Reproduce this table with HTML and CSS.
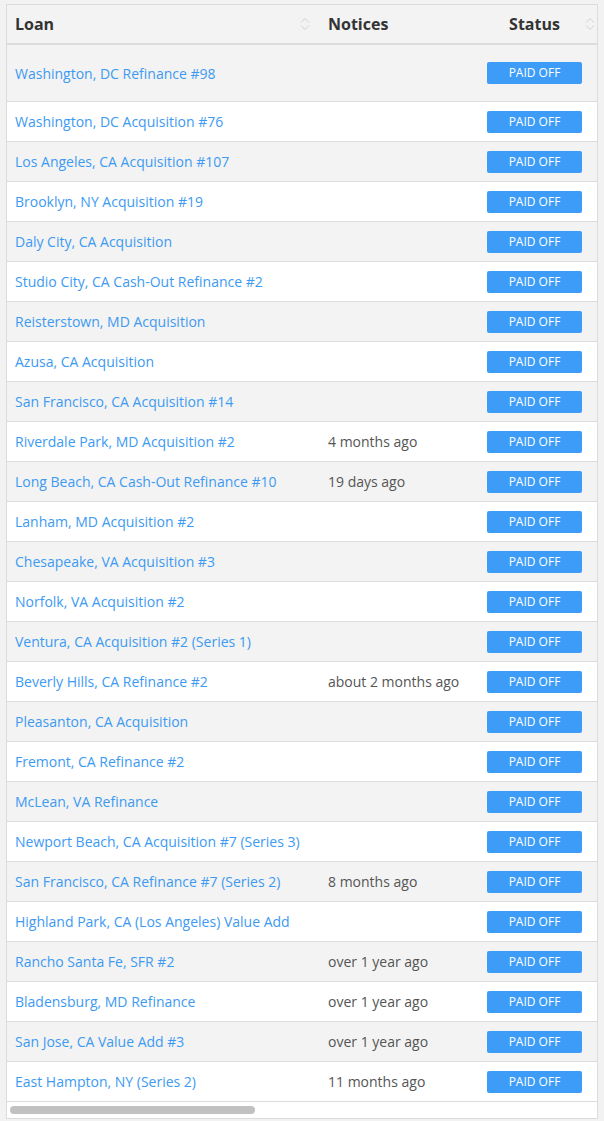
FILE: index.html
```html
<!DOCTYPE html>
<html lang="en">
<head>
    <meta charset="UTF-8">
    <meta name="viewport" content="width=device-width, initial-scale=1.0">
    <title>Loans</title>
    <link rel="stylesheet" href="styles.css">
</head>
<body>
    <div class="table-wrap">
        <table class="loans">
            <colgroup>
                <col class="col-loan">
                <col class="col-notices">
                <col class="col-status">
            </colgroup>
            <thead>
                <tr>
                    <th>
                        <div class="th-inner">
                            <span>Loan</span>
                            <svg class="sort-icon" width="10" height="14" viewBox="0 0 10 14"><path d="M1 5.5 L5 1.5 L9 5.5 M1 8.5 L5 12.5 L9 8.5" fill="none" stroke="#cfcfcf" stroke-width="1"/></svg>
                        </div>
                    </th>
                    <th>
                        <div class="th-inner">
                            <span>Notices</span>
                        </div>
                    </th>
                    <th class="th-status">
                        <div class="th-inner th-center">
                            <span></span>
                            <span>Status</span>
                            <svg class="sort-icon" width="10" height="14" viewBox="0 0 10 14"><path d="M1 5.5 L5 1.5 L9 5.5 M1 8.5 L5 12.5 L9 8.5" fill="none" stroke="#cfcfcf" stroke-width="1"/></svg>
                        </div>
                    </th>
                </tr>
            </thead>
            <tbody>
                <tr class="first"><td><a href="#">Washington, DC Refinance #98</a></td><td></td><td><span class="badge">Paid Off</span></td></tr>
                <tr><td><a href="#">Washington, DC Acquisition #76</a></td><td></td><td><span class="badge">Paid Off</span></td></tr>
                <tr><td><a href="#">Los Angeles, CA Acquisition #107</a></td><td></td><td><span class="badge">Paid Off</span></td></tr>
                <tr><td><a href="#">Brooklyn, NY Acquisition #19</a></td><td></td><td><span class="badge">Paid Off</span></td></tr>
                <tr><td><a href="#">Daly City, CA Acquisition</a></td><td></td><td><span class="badge">Paid Off</span></td></tr>
                <tr><td><a href="#">Studio City, CA Cash-Out Refinance #2</a></td><td></td><td><span class="badge">Paid Off</span></td></tr>
                <tr><td><a href="#">Reisterstown, MD Acquisition</a></td><td></td><td><span class="badge">Paid Off</span></td></tr>
                <tr><td><a href="#">Azusa, CA Acquisition</a></td><td></td><td><span class="badge">Paid Off</span></td></tr>
                <tr><td><a href="#">San Francisco, CA Acquisition #14</a></td><td></td><td><span class="badge">Paid Off</span></td></tr>
                <tr><td><a href="#">Riverdale Park, MD Acquisition #2</a></td><td>4 months ago</td><td><span class="badge">Paid Off</span></td></tr>
                <tr><td><a href="#">Long Beach, CA Cash-Out Refinance #10</a></td><td>19 days ago</td><td><span class="badge">Paid Off</span></td></tr>
                <tr><td><a href="#">Lanham, MD Acquisition #2</a></td><td></td><td><span class="badge">Paid Off</span></td></tr>
                <tr><td><a href="#">Chesapeake, VA Acquisition #3</a></td><td></td><td><span class="badge">Paid Off</span></td></tr>
                <tr><td><a href="#">Norfolk, VA Acquisition #2</a></td><td></td><td><span class="badge">Paid Off</span></td></tr>
                <tr><td><a href="#">Ventura, CA Acquisition #2 (Series 1)</a></td><td></td><td><span class="badge">Paid Off</span></td></tr>
                <tr><td><a href="#">Beverly Hills, CA Refinance #2</a></td><td>about 2 months ago</td><td><span class="badge">Paid Off</span></td></tr>
                <tr><td><a href="#">Pleasanton, CA Acquisition</a></td><td></td><td><span class="badge">Paid Off</span></td></tr>
                <tr><td><a href="#">Fremont, CA Refinance #2</a></td><td></td><td><span class="badge">Paid Off</span></td></tr>
                <tr><td><a href="#">McLean, VA Refinance</a></td><td></td><td><span class="badge">Paid Off</span></td></tr>
                <tr><td><a href="#">Newport Beach, CA Acquisition #7 (Series 3)</a></td><td></td><td><span class="badge">Paid Off</span></td></tr>
                <tr><td><a href="#">San Francisco, CA Refinance #7 (Series 2)</a></td><td>8 months ago</td><td><span class="badge">Paid Off</span></td></tr>
                <tr><td><a href="#">Highland Park, CA (Los Angeles) Value Add</a></td><td></td><td><span class="badge">Paid Off</span></td></tr>
                <tr><td><a href="#">Rancho Santa Fe, SFR #2</a></td><td>over 1 year ago</td><td><span class="badge">Paid Off</span></td></tr>
                <tr><td><a href="#">Bladensburg, MD Refinance</a></td><td>over 1 year ago</td><td><span class="badge">Paid Off</span></td></tr>
                <tr><td><a href="#">San Jose, CA Value Add #3</a></td><td>over 1 year ago</td><td><span class="badge">Paid Off</span></td></tr>
                <tr><td><a href="#">East Hampton, NY (Series 2)</a></td><td>11 months ago</td><td><span class="badge">Paid Off</span></td></tr>
            </tbody>
        </table>
        <div class="scroll-track">
            <div class="scroll-thumb"></div>
        </div>
    </div>
</body>
</html>
```

FILE: styles.css
```css
body {
    margin: 0;
    padding: 4px 6px;
    background-color: #f2f2f2;
    font-family: "Open Sans", sans-serif;
    color: #555;
}

.table-wrap {
    border: 1px solid #dcdcdc;
    background-color: #fff;
}

.loans {
    width: 100%;
    border-collapse: collapse;
    table-layout: fixed;
}

.col-loan {
    width: 313px;
}

.col-notices {
    width: 152px;
}

.col-status {
    width: 125px;
}

.loans th {
    background-color: #f3f3f3;
    border-bottom: 2px solid #dcdcdc;
    height: 38px;
    padding: 0 10px 0 8px;
    text-align: left;
    font-size: 16px;
    font-weight: 700;
    color: #333;
}

.loans th.th-status {
    padding: 0 2px;
}

.th-inner {
    display: flex;
    align-items: center;
    justify-content: space-between;
}

.th-center {
    display: grid;
    grid-template-columns: 1fr auto 1fr;
}

.th-center .sort-icon {
    justify-self: end;
}

.sort-icon {
    display: block;
}

.loans td {
    height: 39px;
    padding: 0 8px;
    border-bottom: 1px solid #dcdcdc;
    font-size: 14px;
    color: #555;
    white-space: nowrap;
}

.loans tbody tr:nth-child(odd) td {
    background-color: #f3f3f3;
}

.loans tbody tr.first td {
    height: 56px;
}

.loans td:last-child {
    text-align: center;
    padding: 0;
}

.loans a {
    color: #3d9af2;
    text-decoration: none;
}

.badge {
    display: inline-block;
    width: 95px;
    height: 22px;
    line-height: 22px;
    border-radius: 2px;
    background-color: #3d9cf8;
    color: #fff;
    font-size: 12px;
    text-transform: uppercase;
    vertical-align: middle;
}

.scroll-track {
    height: 16px;
    display: flex;
    align-items: center;
    padding: 0 3px;
}

.scroll-thumb {
    width: 245px;
    height: 8px;
    border-radius: 4px;
    background-color: #c1c1c1;
}
```
